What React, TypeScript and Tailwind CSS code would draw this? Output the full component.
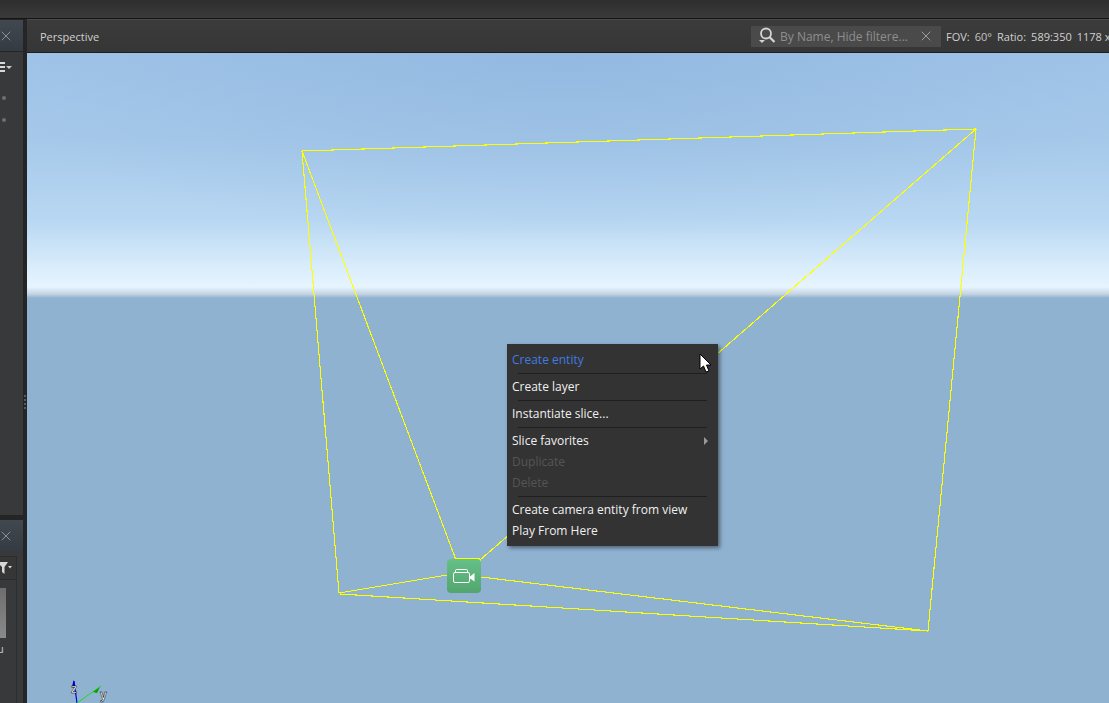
import { X } from 'lucide-react';

const menuFont = { fontFamily: '"Open Sans", sans-serif' };

function Separator() {
  return (
    <div className="h-[6px] flex items-center pl-[11px] pr-[11px]">
      <div className="h-px w-full bg-[#1f1f1f]" />
    </div>
  );
}

function MenuItem({ label, tone = 'normal', arrow = false }: { label: string; tone?: 'normal' | 'active' | 'off'; arrow?: boolean }) {
  const color = tone === 'active' ? 'text-[#3f7be0]' : tone === 'off' ? 'text-[#555555]' : 'text-[#f0f0f0]';
  return (
    <div className={`h-[21px] flex items-center justify-between pl-[5px] pr-[10px] text-[12px] leading-none ${color}`}>
      <span>{label}</span>
      {arrow && <span className="w-0 h-0 border-y-[4px] border-y-transparent border-l-[4px] border-l-[#9a9a9a]" />}
    </div>
  );
}

function ContextMenu() {
  return (
    <div className="absolute left-[480px] top-[291px] w-[211px] py-[5px] bg-[#333333] shadow-[2px_2px_4px_rgba(0,0,0,0.45)]">
      <MenuItem label="Create entity" tone="active" />
      <Separator />
      <MenuItem label="Create layer" />
      <Separator />
      <MenuItem label="Instantiate slice..." />
      <Separator />
      <MenuItem label="Slice favorites" arrow />
      <MenuItem label="Duplicate" tone="off" />
      <MenuItem label="Delete" tone="off" />
      <Separator />
      <MenuItem label="Create camera entity from view" />
      <MenuItem label="Play From Here" />
    </div>
  );
}

function CameraFrustum() {
  return (
    <svg className="absolute inset-0" width="1082" height="650" viewBox="27 53 1082 650" fill="none" shapeRendering="crispEdges">
      <g stroke="#ffff00" strokeWidth="1.1">
        <path d="M302 151 L976 129" />
        <path d="M340 594 L928 631" />
        <path d="M976 129 L928 631" />
        <path d="M302 151 L339 593" />
        <path d="M302 151 L456 560" />
        <path d="M976 129 L480 560" />
        <path d="M339 593 L447 575" />
        <path d="M481 577 L928 631" />
        <path d="M456 559 L480 559 L481 562" />
      </g>
    </svg>
  );
}

function CameraIcon() {
  return (
    <div className="absolute left-[420px] top-[506px] w-[34px] h-[34px] rounded-[4px] bg-[linear-gradient(180deg,#66c088,#53a56f)] flex items-center justify-center">
      <svg width="22" height="14" viewBox="0 0 22 14" fill="none" stroke="#ffffff" strokeWidth="1">
        <path d="M2.5 3.5 V1.5 Q2.5 0.5 3.5 0.5 H13.5 Q14.5 0.5 14.5 1.5 V3.5" />
        <rect x="0.5" y="3.5" width="16" height="10" rx="1.5" />
        <path d="M17 7.5 L21.5 4 V12.5 L17 9.5 Z" fill="#ffffff" stroke="none" />
      </svg>
    </div>
  );
}

function Axes() {
  return (
    <svg className="absolute left-[40px] bottom-0" width="50" height="24" viewBox="0 0 50 24" fill="none">
      <path d="M10 24 L7 2" stroke="#0000e0" strokeWidth="1.2" />
      <path d="M5 8 L6.5 1 L8.5 8 Z" fill="#0000c0" />
      <path d="M10 24 L34 7" stroke="#14e014" strokeWidth="1" />
      <path d="M26 13 L33 8 L30 14 Z" fill="#0a9a0a" />
      <text x="4" y="14" fontSize="12" fontWeight="700" fill="#ffffff" stroke="#000000" strokeWidth="0.5" fontFamily="Liberation Sans, sans-serif">z</text>
      <text x="33" y="20" fontSize="12" fontWeight="700" fill="#ffffff" stroke="#000000" strokeWidth="0.5" fontFamily="Liberation Sans, sans-serif">y</text>
    </svg>
  );
}

function Cursor() {
  return (
    <svg className="absolute left-[672px] top-[300px]" width="13" height="21" viewBox="0 0 13 21">
      <path d="M1 1 V16 L4.5 13 L7 19 L10 18 L7.5 12 H12 Z" fill="#ffffff" stroke="#000000" strokeWidth="1" />
    </svg>
  );
}

function PanelTitle() {
  return (
    <div className="h-[31px] bg-[linear-gradient(180deg,#414850,#343b43)] flex items-center -ml-[2px]">
      <X size={16} strokeWidth={1} className="text-[#b4b8bc]" />
    </div>
  );
}

function LeftDock() {
  return (
    <div className="w-[23px] flex flex-col bg-[#252525] overflow-hidden shrink-0">
      <div className="h-[495px] flex flex-col bg-[#38393a] mt-px">
        <PanelTitle />
        <div className="h-px bg-[#252525]" />
        <div className="h-[30px] flex items-center -ml-[3px]">
          <div className="flex flex-col gap-[2px] w-[8px]">
            <div className="h-[2px] bg-[#d8d8d8]" />
            <div className="h-[2px] bg-[#d8d8d8]" />
            <div className="h-[2px] bg-[#d8d8d8]" />
          </div>
          <span className="ml-px w-0 h-0 border-x-[3px] border-x-transparent border-t-[3px] border-t-[#d0d0d0]" />
        </div>
        <div className="flex flex-col gap-[18px] pl-[2px] pt-[14px]">
          <div className="w-[4px] h-[4px] rounded-full bg-[#707070]" />
          <div className="w-[4px] h-[4px] rounded-full bg-[#707070]" />
        </div>
      </div>
      <div className="h-[5px]" />
      <div className="flex-1 flex flex-col bg-[#38393a]">
        <PanelTitle />
        <div className="h-[5px]" />
        <div className="h-[24px] flex items-center w-[17px] border-r border-[#2c2c2c] border-y bg-[#363636]">
          <svg width="13" height="14" viewBox="0 0 13 14">
            <path d="M-3 1 H8 L4.5 6 V13 L2 11 V6 Z" fill="#d8d8d8" />
            <path d="M8 5 H12 L10 7.5 Z" fill="#d8d8d8" />
          </svg>
        </div>
        <div className="flex-1 flex flex-col w-[17px] border-r border-[#2e2e2e] pt-[8px]">
          <div className="w-[6px] h-[50px] bg-[linear-gradient(180deg,#6e6e6e,#8a8a8a)]" />
          <div className="mt-[5px] text-[11px] leading-none text-[#c8c8c8] -ml-[3px]" style={menuFont}>u</div>
        </div>
      </div>
    </div>
  );
}

function Gutter() {
  return (
    <div className="w-[4px] shrink-0 bg-[#252525] flex flex-col items-center pt-[376px] gap-[2px]">
      {[0, 1, 2, 3].map((i) => (
        <div key={i} className="w-[2px] h-[2px] bg-[#5a5a5a]" />
      ))}
    </div>
  );
}

function ViewportHeader() {
  return (
    <div className="h-[34px] shrink-0 bg-[linear-gradient(180deg,#3b3b3b,#363636)] border-b border-[#1e1e1e] border-t border-t-[#4a4a4a] flex items-center justify-between pl-[13px] text-[11px] whitespace-nowrap overflow-hidden text-[#d0d0d0]">
      <span className="pt-[2px]">Perspective</span>
      <div className="flex items-center w-[358px] shrink-0">
        <div className="w-[190px] h-[21px] shrink-0 bg-[#4a4a4a] flex items-center pl-[6px] pr-[7px] text-[12px] text-[#8e8e8e]">
          <svg width="19" height="18" viewBox="0 0 19 18" fill="none" className="shrink-0">
            <circle cx="9" cy="6.5" r="5" stroke="#d4d4d4" strokeWidth="1.8" />
            <path d="M12.5 10 L17.5 15" stroke="#d4d4d4" strokeWidth="2.2" />
            <path d="M2 13 H8 L5 16 Z" fill="#d4d4d4" />
          </svg>
          <span className="ml-[4px] flex-1 pt-[2px]">By Name, Hide filtere...</span>
          <X size={16} strokeWidth={1} className="text-[#c8c8c8] shrink-0" />
        </div>
        <div className="flex ml-[5px] gap-[5px] pt-[2px] text-[11px] text-[#d0d0d0]">
          <span>FOV:</span>
          <span className="text-[#c4c4c4]">60°</span>
          <span>Ratio:</span>
          <span>589:350</span>
          <span>1178 x</span>
        </div>
      </div>
    </div>
  );
}

export default function App() {
  return (
    <div className="w-[1109px] h-[703px] flex flex-col overflow-hidden bg-[#252525]" style={menuFont}>
      <div className="h-[19px] shrink-0 bg-[linear-gradient(180deg,#2e2e2e,#3a3a3a)] border-b border-[#141414]" />
      <div className="flex-1 flex min-h-0">
        <LeftDock />
        <Gutter />
        <div className="flex-1 flex flex-col min-w-0">
          <ViewportHeader />
          <div className="relative flex-1 bg-[radial-gradient(ellipse_620px_190px_at_540px_0px,rgba(130,170,215,0.42),rgba(130,170,215,0)),linear-gradient(180deg,#a0c4e8_0px,#a6c9ea_87px,#b8d7f2_167px,#dbeefc_217px,#e6f4fe_234px,#c4d4e2_241px,#90b2d1_245px,#90b2d1_650px)] overflow-hidden">
            <CameraFrustum />
            <CameraIcon />
            <Axes />
            <ContextMenu />
            <Cursor />
          </div>
        </div>
      </div>
    </div>
  );
}
